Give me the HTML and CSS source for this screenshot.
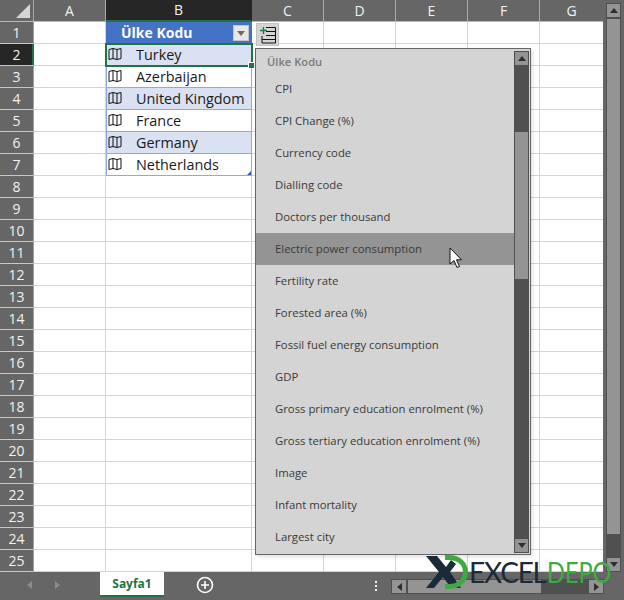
FILE: index.html
```html
<!DOCTYPE html>
<html lang="tr">
<head>
<meta charset="utf-8">
<title>Sayfa1</title>
<link rel="stylesheet" href="styles.css">
</head>
<body>
<div class="app">
  <div class="main">
    <div class="sheet">
      <table class="grid">
        <colgroup><col class="w-head"><col class="w-72"><col class="w-b"><col class="w-72"><col class="w-72"><col class="w-72"><col class="w-72"><col class="w-g"></colgroup>
        <thead>
          <tr><th class="corner"><span class="corner-tri"></span></th><th>A</th><th class="col-active">B</th><th>C</th><th>D</th><th>E</th><th>F</th><th class="col-last">G</th></tr>
        </thead>
        <tbody>
          <tr><th>1</th><td></td><td class="t-head"><span>Ülke Kodu</span><button class="filter"><span class="down"></span></button></td><td></td><td></td><td></td><td></td><td></td></tr>
          <tr><th class="row-active">2</th><td></td><td class="t-cell band"><svg class="map" viewBox="0 0 14 12"><path d="M1 1.5 5 .5 9 1.5 13 .5V10.5L9 11.5 5 10.5 1 11.5ZM5 .5V10.5M9 1.5V11.5"/></svg><span>Turkey</span></td><td></td><td></td><td></td><td></td><td></td></tr>
          <tr><th>3</th><td></td><td class="t-cell"><svg class="map" viewBox="0 0 14 12"><path d="M1 1.5 5 .5 9 1.5 13 .5V10.5L9 11.5 5 10.5 1 11.5ZM5 .5V10.5M9 1.5V11.5"/></svg><span>Azerbaijan</span></td><td></td><td></td><td></td><td></td><td></td></tr>
          <tr><th>4</th><td></td><td class="t-cell band"><svg class="map" viewBox="0 0 14 12"><path d="M1 1.5 5 .5 9 1.5 13 .5V10.5L9 11.5 5 10.5 1 11.5ZM5 .5V10.5M9 1.5V11.5"/></svg><span>United Kingdom</span></td><td></td><td></td><td></td><td></td><td></td></tr>
          <tr><th>5</th><td></td><td class="t-cell"><svg class="map" viewBox="0 0 14 12"><path d="M1 1.5 5 .5 9 1.5 13 .5V10.5L9 11.5 5 10.5 1 11.5ZM5 .5V10.5M9 1.5V11.5"/></svg><span>France</span></td><td></td><td></td><td></td><td></td><td></td></tr>
          <tr><th>6</th><td></td><td class="t-cell band"><svg class="map" viewBox="0 0 14 12"><path d="M1 1.5 5 .5 9 1.5 13 .5V10.5L9 11.5 5 10.5 1 11.5ZM5 .5V10.5M9 1.5V11.5"/></svg><span>Germany</span></td><td></td><td></td><td></td><td></td><td></td></tr>
          <tr><th>7</th><td></td><td class="t-cell"><svg class="map" viewBox="0 0 14 12"><path d="M1 1.5 5 .5 9 1.5 13 .5V10.5L9 11.5 5 10.5 1 11.5ZM5 .5V10.5M9 1.5V11.5"/></svg><span>Netherlands</span><span class="resize"></span></td><td></td><td></td><td></td><td></td><td></td></tr>
          <tr><th>8</th><td></td><td></td><td></td><td></td><td></td><td></td><td></td></tr>
          <tr><th>9</th><td></td><td></td><td></td><td></td><td></td><td></td><td></td></tr>
          <tr><th>10</th><td></td><td></td><td></td><td></td><td></td><td></td><td></td></tr>
          <tr><th>11</th><td></td><td></td><td></td><td></td><td></td><td></td><td></td></tr>
          <tr><th>12</th><td></td><td></td><td></td><td></td><td></td><td></td><td></td></tr>
          <tr><th>13</th><td></td><td></td><td></td><td></td><td></td><td></td><td></td></tr>
          <tr><th>14</th><td></td><td></td><td></td><td></td><td></td><td></td><td></td></tr>
          <tr><th>15</th><td></td><td></td><td></td><td></td><td></td><td></td><td></td></tr>
          <tr><th>16</th><td></td><td></td><td></td><td></td><td></td><td></td><td></td></tr>
          <tr><th>17</th><td></td><td></td><td></td><td></td><td></td><td></td><td></td></tr>
          <tr><th>18</th><td></td><td></td><td></td><td></td><td></td><td></td><td></td></tr>
          <tr><th>19</th><td></td><td></td><td></td><td></td><td></td><td></td><td></td></tr>
          <tr><th>20</th><td></td><td></td><td></td><td></td><td></td><td></td><td></td></tr>
          <tr><th>21</th><td></td><td></td><td></td><td></td><td></td><td></td><td></td></tr>
          <tr><th>22</th><td></td><td></td><td></td><td></td><td></td><td></td><td></td></tr>
          <tr><th>23</th><td></td><td></td><td></td><td></td><td></td><td></td><td></td></tr>
          <tr><th>24</th><td></td><td></td><td></td><td></td><td></td><td></td><td></td></tr>
          <tr><th>25</th><td></td><td></td><td></td><td></td><td></td><td></td><td></td></tr>
        </tbody>
      </table>

      <div class="selection"><span class="handle"></span></div>

      <button class="insert-btn">
        <svg viewBox="0 0 18 18" width="18" height="18">
          <path class="ins-lines" d="M7 1.5H16.5V17H3V10M7 5.5H16.5M7 9.5H16.5M3 13.5H16.5"/>
          <path class="ins-plus" d="M4.5 1V8M1 4.5H8"/>
        </svg>
      </button>

      <div class="popup">
        <div class="list">
          <div class="list-title">Ülke Kodu</div>
          <div class="item">CPI</div>
          <div class="item">CPI Change (%)</div>
          <div class="item">Currency code</div>
          <div class="item">Dialling code</div>
          <div class="item">Doctors per thousand</div>
          <div class="item hover">Electric power consumption</div>
          <div class="item">Fertility rate</div>
          <div class="item">Forested area (%)</div>
          <div class="item">Fossil fuel energy consumption</div>
          <div class="item">GDP</div>
          <div class="item">Gross primary education enrolment (%)</div>
          <div class="item">Gross tertiary education enrolment (%)</div>
          <div class="item">Image</div>
          <div class="item">Infant mortality</div>
          <div class="item">Largest city</div>
        </div>
        <div class="pop-scroll">
          <div class="sb-btn"><span class="up"></span></div>
          <div class="pop-track-a"></div>
          <div class="pop-thumb"></div>
          <div class="pop-track-b"></div>
          <div class="sb-btn"><span class="down dark"></span></div>
        </div>
      </div>

      <svg class="cursor" viewBox="0 0 14 22" width="14" height="22">
        <path d="M1 1V17L5 13.5 8 20.5 10.5 19.5 7.5 12.8H12.5Z"/>
      </svg>
    </div>

    <div class="vscroll">
      <div class="sb-btn"><span class="up"></span></div>
      <div class="v-thumb"></div>
      <div class="v-track"></div>
      <div class="sb-btn"><span class="down dark"></span></div>
    </div>
  </div>

  <div class="bottom">
    <div class="tab-nav">
      <span class="nav-left"></span>
      <span class="nav-right"></span>
    </div>
    <div class="tab">Sayfa1</div>
    <svg class="add" viewBox="0 0 18 18" width="18" height="18">
      <circle cx="9" cy="9" r="7.5"/>
      <path d="M9 5V13M5 9H13"/>
    </svg>
    <div class="dots"><span></span><span></span><span></span></div>
    <div class="hscroll">
      <div class="sb-btn h"><span class="left"></span></div>
      <div class="h-thumb"></div>
      <div class="h-track"></div>
      <div class="sb-btn h"><span class="right"></span></div>
    </div>
  </div>

  <div class="logo">
    <svg class="logo-mark" viewBox="0 0 44 36" width="44" height="36">
      <path class="mark-x" d="M1 2H12L21 13 26 6 31 10 25 18 36 34H26L18 23 9 34H1L14 18Z"/>
      <path class="mark-d" d="M20 3.5H24C34 3.5 40.5 10 40.5 18S34 32.5 24 32.5H20"/>
    </svg>
    <span class="logo-excel">EXCEL</span><span class="logo-depo">DEPO</span>
  </div>
</div>
</body>
</html>
```

FILE: styles.css
```css
* { box-sizing: border-box; }
html, body { margin: 0; padding: 0; }
body { width: 624px; height: 600px; overflow: hidden; background: #666; font-family: "Open Sans", "Noto Sans", sans-serif; }

.app { position: relative; width: 624px; height: 600px; overflow: hidden; display: flex; flex-direction: column; }
.main { display: flex; height: 572px; }
.sheet { position: relative; width: 603px; height: 572px; background: #fff; }

.grid { border-collapse: separate; border-spacing: 0; table-layout: fixed; width: 603px; }
.w-head { width: 34px; }
.w-72 { width: 72px; }
.w-b { width: 146px; }
.w-g { width: 63px; }
.grid tr { height: 22px; }
.grid th { padding: 0; background: #666; color: #f2f2f2; font-weight: 400; font-size: 14px; line-height: 20px; height: 22px; text-align: center; border-right: 1px solid #d4d4d4; border-bottom: 1px solid #d4d4d4; }
.grid thead th { border-bottom: 1px solid #b8b8b8; border-right: 1px solid #aaa; background: #666; }
.grid thead th.col-active { background: #262626; color: #f4f4f4; border-bottom: 2px solid #217346; border-right-color: #262626; }
.grid thead th.col-last { border-right: 0; }
.grid tbody th { background: #666; border-right: 1px solid #a0a0a0; border-bottom: 1px solid #c8c8c8; width: 34px; }
.grid tbody th.row-active { background: #262626; border-right-color: #217346; box-shadow: inset -1px 0 0 #217346; }
.grid td { padding: 0; height: 22px; border-right: 1px solid #d4d4d4; border-bottom: 1px solid #d4d4d4; background: #fff; }
.grid tr > td:last-child { border-right: 0; }

.corner { position: relative; }
.corner-tri { position: absolute; right: 3px; bottom: 3px; width: 0; height: 0; border-style: solid; border-width: 0 0 14px 14px; border-color: transparent transparent #d6d6d6 transparent; }

.t-head { position: relative; background: #4472c4 !important; color: #fff; font-weight: 700; font-size: 14px; border-right-color: #4472c4 !important; border-bottom-color: #8ea9db !important; }
.t-head > span { display: block; padding-left: 15px; line-height: 20px; }
.filter { position: absolute; right: 2px; top: 3px; width: 16px; height: 16px; padding: 0; background: #e8e8e8; border: 1px solid #c4c4c4; display: flex; align-items: center; justify-content: center; }
.t-cell { position: relative; color: #1a1a1a; font-size: 14.4px; line-height: 20px; border-right-color: #8ea9db !important; border-bottom-color: #8ea9db !important; box-shadow: inset 1px 0 0 #8ea9db; }
.t-cell.band { background: #d9e1f2; }
.t-cell span { display: block; padding-left: 30px; white-space: nowrap; }
.map { position: absolute; left: 2px; top: 4px; width: 14px; height: 12px; }
.map path { fill: none; stroke: #111; stroke-width: 1; }
.resize { position: absolute; right: 0; bottom: 0; width: 0; height: 0; padding: 0 !important; border-style: solid; border-width: 0 0 4px 4px; border-color: transparent transparent #2f5cb8 transparent; }

.selection { position: absolute; left: 105px; top: 43px; width: 148px; height: 24px; border: 2px solid #217346; }
.handle { position: absolute; right: -3px; bottom: -3px; width: 6px; height: 6px; background: #217346; border: 1px solid #fff; border-width: 1px 0 0 1px; }

.insert-btn { position: absolute; left: 256px; top: 23px; width: 23px; height: 23px; padding: 0; background: #d4d4d4; border: 1px solid #c2c2c2; display: flex; align-items: center; justify-content: center; }
.ins-lines { fill: none; stroke: #111; stroke-width: 1; }
.ins-plus { fill: none; stroke: #217346; stroke-width: 1.4; }

.popup { position: absolute; left: 255px; top: 48px; width: 276px; height: 507px; display: flex; background: #d4d4d4; border: 1px solid #666; box-shadow: 2px 2px 4px rgba(0,0,0,.12); }
.list { width: 258px; flex: none; }
.list-title { height: 24px; line-height: 25px; padding-left: 11px; font-size: 11.2px; font-weight: 600; color: #7a7a7a; }
.item { height: 32px; line-height: 32px; padding-left: 19px; font-size: 11.33px; color: #3a3a3a; white-space: nowrap; }
.item.hover { background: #949494; }
.pop-scroll { margin-left: 0; width: 15px; margin-top: 2px; display: flex; flex-direction: column; height: 502px; }
.pop-track-a { height: 65px; background: #505050; }
.pop-thumb { height: 149px; background: #949494; border: 1px solid #505050; }
.pop-track-b { flex: 1; background: #505050; }

.sb-btn { flex: none; width: 15px; height: 15px; background: #949494; border: 1px solid #505050; display: flex; align-items: center; justify-content: center; }
.sb-btn.h { width: 16px; height: 15px; }
.up, .down, .left, .right { display: block; width: 0; height: 0; border-style: solid; }
.up { border-width: 0 4.5px 5px; border-color: transparent transparent #2e2e2e; }
.down { border-width: 5px 4px 0; border-color: #6a6a6a transparent transparent; }
.down.dark { border-width: 5px 4.5px 0; border-color: #2e2e2e transparent transparent; }
.left { border-width: 4.5px 5px 4.5px 0; border-color: transparent #2e2e2e transparent transparent; }
.right { border-width: 4.5px 0 4.5px 5px; border-color: transparent transparent transparent #2e2e2e; }

.cursor { position: absolute; left: 449px; top: 247px; }
.cursor path { fill: #fff; stroke: #111; stroke-width: 1; }

.vscroll { width: 21px; height: 572px; padding: 3px 3px 0 3px; display: flex; flex-direction: column; background: #666; }
.v-thumb { height: 517px; width: 15px; background: #949494; border: 1px solid #505050; }
.v-track { flex: 1; background: #505050; width: 15px; }

.bottom { position: relative; height: 28px; background: #666; display: flex; align-items: flex-start; }
.tab-nav { width: 100px; height: 26px; display: flex; align-items: center; padding-left: 27px; gap: 20px; }
.nav-left { width: 0; height: 0; border-style: solid; border-width: 4.5px 5px 4.5px 0; border-color: transparent #8c8c8c transparent transparent; }
.nav-right { width: 0; height: 0; border-style: solid; border-width: 4.5px 0 4.5px 5px; border-color: transparent transparent transparent #8c8c8c; margin-left: 3px; }
.tab { width: 64px; height: 25px; background: #fff; border-bottom: 2px solid #217346; color: #217346; font-size: 12px; font-weight: 700; line-height: 23px; text-align: center; }
.add { margin: 4px 0 0 32px; }
.add circle { fill: none; stroke: #fff; stroke-width: 1.6; }
.add path { fill: none; stroke: #fff; stroke-width: 1.6; }
.dots { margin: 9px 0 0 161px; display: flex; flex-direction: column; gap: 2px; width: 3px; }
.dots span { width: 2px; height: 2px; background: #f0f0f0; }
.hscroll { position: absolute; left: 391px; top: 7px; width: 213px; height: 15px; display: flex; }
.h-thumb { width: 135px; height: 15px; background: #949494; border: 1px solid #505050; }
.h-track { flex: 1; background: #505050; }

.logo { position: absolute; left: 425px; top: 554px; height: 36px; display: flex; align-items: center; line-height: 1; }
.logo-mark { flex: none; overflow: visible; }
.mark-x { fill: #1b2a38; }
.mark-d { fill: none; stroke: #3faa3f; stroke-width: 5; }
.logo-excel, .logo-depo { display: block; flex: none; font-family: Lato, "Open Sans", sans-serif; font-size: 28px; font-weight: 400; }
.logo-excel { color: #1b2a38; letter-spacing: -1.2px; }
.logo-depo { color: #3faa3f; transform: scaleX(.84); transform-origin: left center; margin-left: 1px; }
```
